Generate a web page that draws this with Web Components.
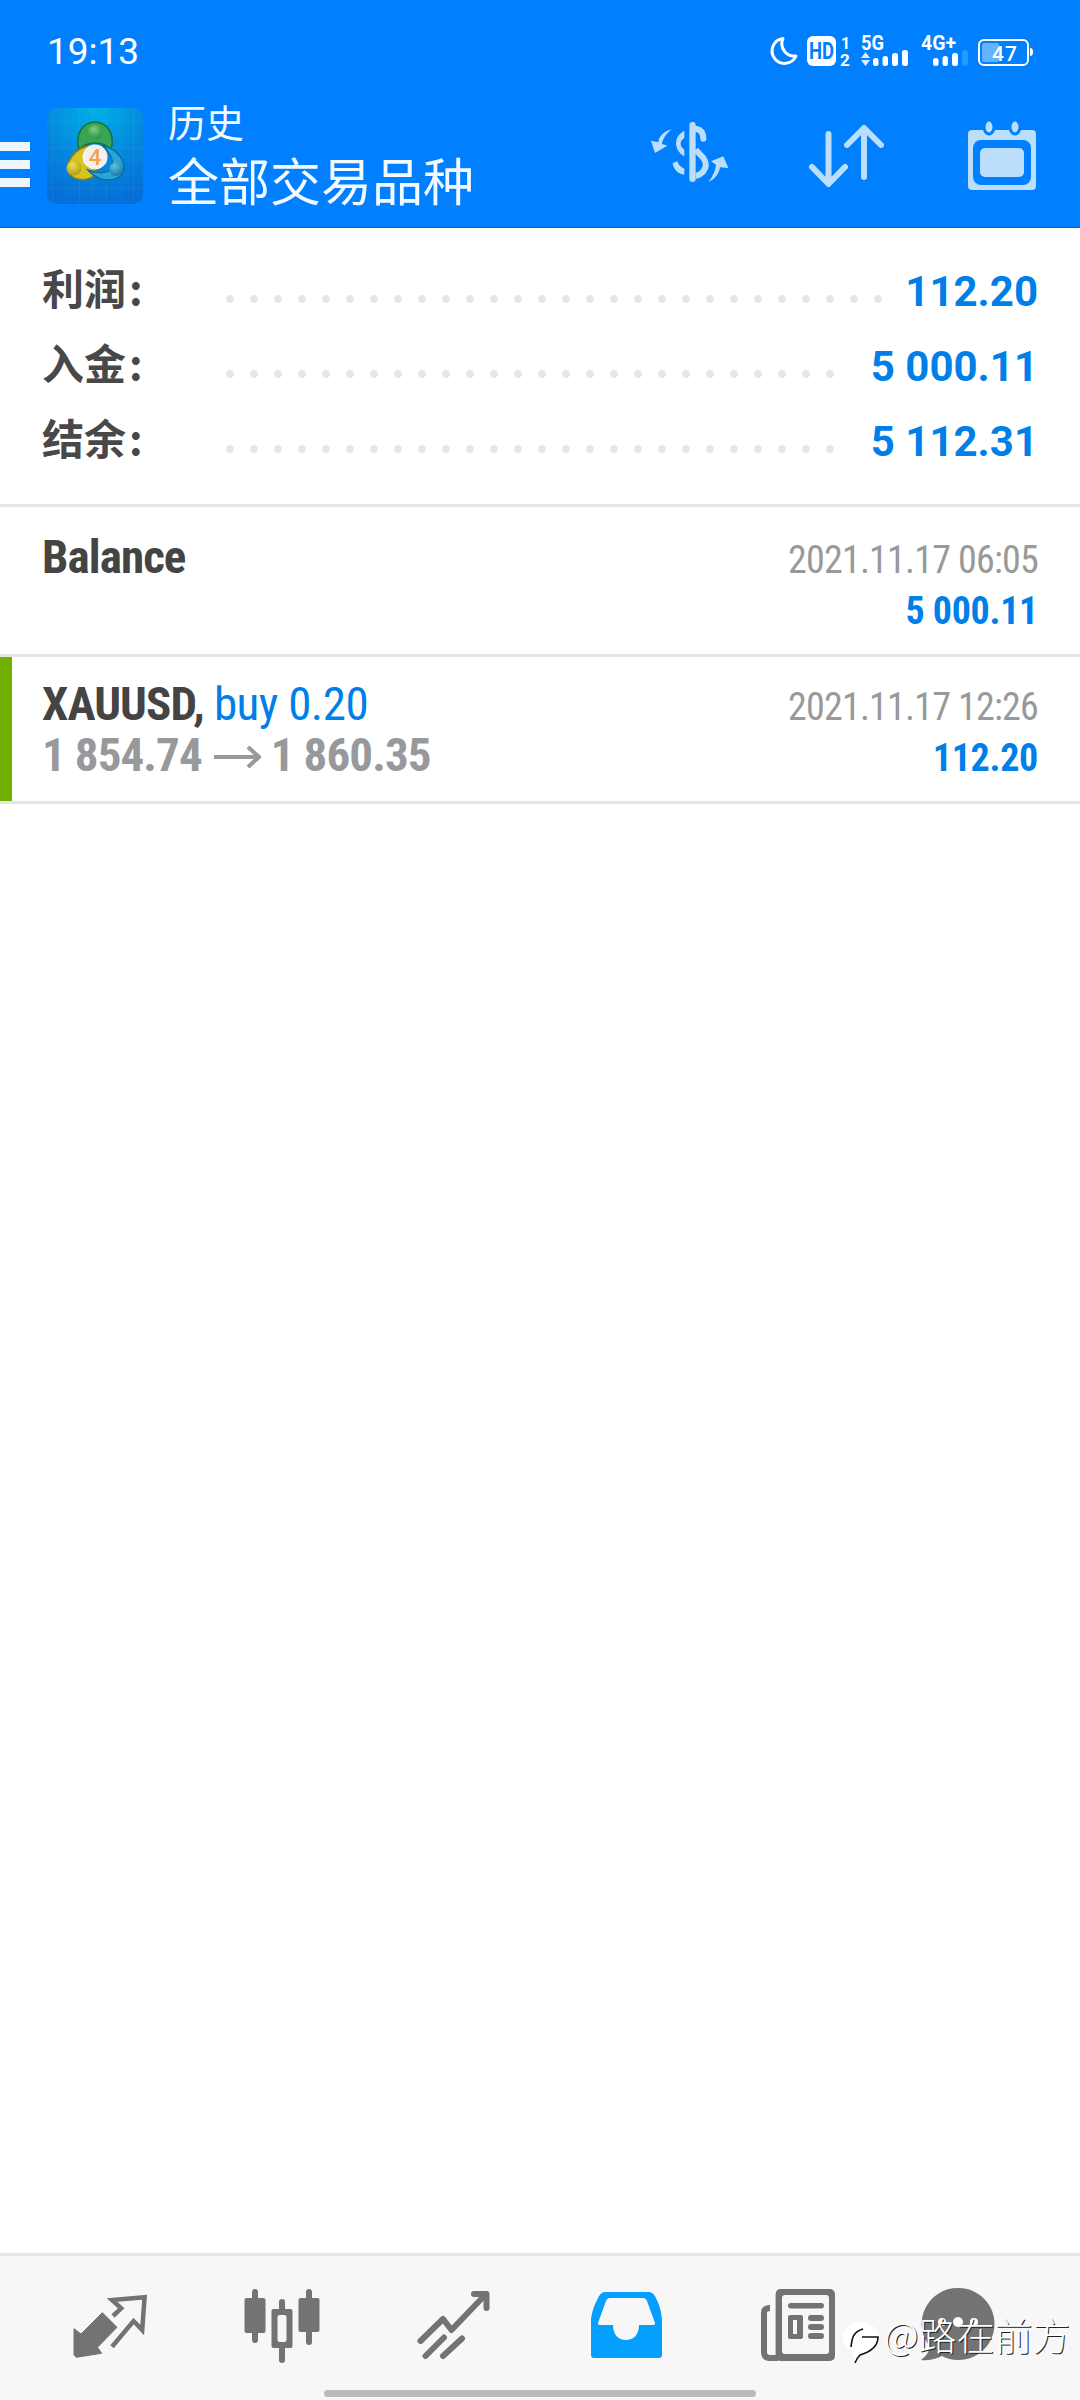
<!DOCTYPE html>
<html lang="zh">
<head>
<meta charset="utf-8">
<title>历史</title>
<style>
    html, body { margin: 0; padding: 0; background: #fff; }
    body { width: 1080px; height: 2400px; overflow: hidden; font-family: Roboto, "Noto Sans CJK SC", sans-serif; }
    app-shell { height: 2400px; }
</style>
</head>
<body>
<app-shell>
    <status-bar slot="top" time="19:13"></status-bar>
    <tool-bar slot="top" title="历史" subtitle="全部交易品种"></tool-bar>

    <summary-panel>
        <summary-row label="利润" value="112.20" dots="28"></summary-row>
        <summary-row label="入金" value="5 000.11" dots="26"></summary-row>
        <summary-row label="结余" value="5 112.31" dots="26"></summary-row>
    </summary-panel>

    <deal-row date="2021.11.17 06:05" amount="5 000.11" top="24">
        <span slot="title">Balance</span>
    </deal-row>
    <deal-row accent date="2021.11.17 12:26" amount="112.20" top="21">
        <span slot="title">XAUUSD, <deal-side>buy 0.20</deal-side></span>
        <deal-prices slot="sub" open="1 854.74" close="1 860.35"></deal-prices>
    </deal-row>

    <bottom-nav slot="bottom"></bottom-nav>
</app-shell>

<script>
const BLUE = '#007fff';

// page frame: blue head, white list, nav pinned to the bottom
class AppShell extends HTMLElement {
    constructor() {
        super();
        this.attachShadow({ mode: 'open' });
        this.shadowRoot.innerHTML = `
            <style>
                :host { display: flex; flex-direction: column; background: #fff; }
                main { flex: 1; display: block; }
            </style>
            <slot name="top"></slot>
            <main><slot></slot></main>
            <slot name="bottom"></slot>
        `;
    }
}

const statusTemplate = document.createElement('template');
statusTemplate.innerHTML = `
    <style>
        :host { display: flex; height: 102px; background: ${BLUE}; color: #fff; box-sizing: border-box; padding: 33px 0 0 47px; justify-content: space-between; align-items: flex-start; }
        .time { font: 400 37px/38px Roboto, sans-serif; }
        svg { display: block; margin: -9px 45px 0 0; }
        text { font-family: Roboto, sans-serif; font-weight: 700; fill: #fff; }
    </style>
    <div class="time"></div>
    <svg width="270" height="45" viewBox="765 24 270 45">
        <path d="M783 38.500A12.500 12.500 0 1 0 796 56A12.500 12.500 0 0 1 783 38.500Z" fill="none" stroke="#fff" stroke-width="3" stroke-linejoin="round"/>
        <rect x="807" y="36" width="29" height="30" rx="6" fill="#fff"/>
        <text x="809" y="59" font-size="23" textLength="25" lengthAdjust="spacingAndGlyphs" style="fill:${BLUE}">HD</text>
        <text x="841" y="49" font-size="16">1</text>
        <text x="840" y="66" font-size="17">2</text>
        <text x="861" y="50" font-size="20" textLength="23" lengthAdjust="spacingAndGlyphs">5G</text>
        <path d="M865.500 52L870 58H861ZM861 60H870L865.500 66Z" fill="#fff" opacity=".85"/>
        <g fill="#fff">
            <rect x="873" y="58" width="5.500" height="8" rx="2.500"/>
            <rect x="882.500" y="56" width="5.500" height="10" rx="2.500"/>
            <rect x="892" y="53" width="6" height="13" rx="2.500"/>
            <rect x="902" y="50" width="6" height="16" rx="2.500"/>
        </g>
        <text x="921" y="50" font-size="20" textLength="35" lengthAdjust="spacingAndGlyphs">4G+</text>
        <g fill="#fff">
            <rect x="933" y="58" width="5.500" height="8" rx="2.500"/>
            <rect x="942.500" y="56" width="5.500" height="10" rx="2.500"/>
            <rect x="952" y="53" width="6" height="13" rx="2.500"/>
            <rect x="962" y="50" width="6" height="16" rx="2.500" fill="#1f9bff"/>
        </g>
        <rect x="979" y="40" width="49" height="25" rx="5" fill="none" stroke="#fff" stroke-width="2"/>
        <rect x="982" y="43" width="17" height="19" rx="2" fill="#63b3ff"/>
        <path d="M1030 48a3 4 0 0 1 0 8Z" fill="#fff"/>
        <text x="992" y="61" font-size="21" textLength="25" style="font-weight:500">47</text>
    </svg>
`;

class StatusBar extends HTMLElement {
    constructor() {
        super();
        this.attachShadow({ mode: 'open' });
        this.shadowRoot.appendChild(statusTemplate.content.cloneNode(true));
        this.shadowRoot.querySelector('.time').innerText = this.getAttribute('time');
    }
}

const toolTemplate = document.createElement('template');
toolTemplate.innerHTML = `
    <style>
        :host { display: flex; height: 126px; box-sizing: border-box; background: ${BLUE}; border-bottom: 1px solid #0a63b5; color: #fff; align-items: flex-start; padding-top: 6px; }
        .menu { width: 30px; margin-top: 34px; display: flex; flex-direction: column; gap: 9px; flex: none; }
        .menu i { display: block; height: 9px; background: #eef7ff; }
        .logo { display: block; margin-left: 17px; flex: none; }
        .titles { margin-left: 25px; font-family: "Noto Sans CJK SC", sans-serif; flex: none; margin-top: -15px; }
        .t1 { font-size: 38px; line-height: 56px; font-weight: 400; color: #f2f9ff; }
        .t2 { font-size: 51px; line-height: 60px; font-weight: 400; color: #f2f9ff; }
        .actions { display: flex; flex: none; margin-left: auto; margin-right: 40px; align-items: flex-start; }
    </style>
    <div class="menu"><i></i><i></i><i></i></div>
    <svg class="logo" width="96" height="96" viewBox="48 108 96 96">
        <defs>
            <radialGradient id="lg" cx=".5" cy="0" r="1.1">
                <stop offset="0" stop-color="#00b1e6"/><stop offset=".55" stop-color="#0484dc"/><stop offset="1" stop-color="#0669d6"/>
            </radialGradient>
            <pattern id="grid" width="13.5" height="13.5" patternUnits="userSpaceOnUse">
                <path d="M13.500 0V13.500H0" fill="none" stroke="#fff" stroke-opacity=".09" stroke-width="1"/>
            </pattern>
            <radialGradient id="hg" cx=".4" cy=".3" r=".8"><stop offset="0" stop-color="#7fd07f"/><stop offset="1" stop-color="#238a3f"/></radialGradient>
            <radialGradient id="hy" cx=".4" cy=".3" r=".8"><stop offset="0" stop-color="#f0e04c"/><stop offset="1" stop-color="#a6930e"/></radialGradient>
            <radialGradient id="hb" cx=".4" cy=".3" r=".8"><stop offset="0" stop-color="#58c4e8"/><stop offset="1" stop-color="#136f9e"/></radialGradient>
        </defs>
        <rect x="48" y="108" width="96" height="96" rx="10" fill="url(#lg)"/>
        <rect x="48" y="108" width="96" height="96" rx="10" fill="url(#grid)"/>
        <path d="M80 150C75 132 86 122 96 122C106 122 117 132 112 150C108 145 102 143 96 143C90 143 84 145 80 150Z" fill="#3aa455" stroke="#14703a" stroke-width="1.500"/>
        <path d="M92 146C80 146 69 157 69 168C69 177 78 181 88 179C92 178 96 176 99 172L88 166C84 160 86 152 92 146Z" fill="#d9c41f" stroke="#8f7f10" stroke-width="1.500"/>
        <path d="M104 146C116 148 125 158 125 168C125 178 112 182 102 179C97 177 92 174 89 170C96 173 106 174 112 170C116 164 112 153 104 146Z" fill="#25a7dc" stroke="#0e6c9c" stroke-width="1.500"/>
        <circle cx="96" cy="132" r="7" fill="url(#hg)"/>
        <circle cx="75" cy="168" r="7.500" fill="url(#hy)"/>
        <circle cx="117" cy="169" r="7" fill="url(#hb)"/>
        <circle cx="96" cy="157" r="12.500" fill="#f3f1ee"/>
        <text x="96" y="165" text-anchor="middle" font-family="Roboto, sans-serif" font-size="22" font-weight="500" fill="#f5a14a">4</text>
    </svg>
    <div class="titles"><div class="t1"></div><div class="t2"></div></div>
    <div class="actions">
        <svg width="100" height="85" viewBox="0 0 300 255" fill="#bbdefb">
            <rect x="148" y="42" width="19" height="180" rx="9"/>
            <path d="M167 62Q190 65 190 92" fill="none" stroke="#bbdefb" stroke-width="18" stroke-linecap="round"/>
            <path d="M167 125L190 150Q205 170 190 190Q180 202 167 203" fill="none" stroke="#bbdefb" stroke-width="18"/>
            <path d="M133 68C100 85 100 125 133 145V125C118 115 118 100 133 90Z"/>
            <path d="M98 165C100 185 115 198 133 200V182C122 178 115 170 112 160Z"/>
            <path d="M95 64C70 70 58 85 55 103L33 98L45 135L82 113L66 108C68 92 78 78 95 64Z"/>
            <path d="M205 222C225 215 238 195 240 178L265 180L250 145L213 160L228 170C226 190 218 205 205 222Z"/>
        </svg>
        <svg style="margin-left:60px;margin-top:12px" width="90" height="72" viewBox="0 0 90 72" fill="none" stroke="#bbdefb" stroke-width="6" stroke-linecap="round" stroke-linejoin="round">
            <path d="M28.500 14V63M12 47L28.500 64L45 47"/>
            <path d="M64 8V57M47 25L64 8L81 25"/>
        </svg>
        <svg style="margin-left:75px;margin-top:9px" width="75" height="76" viewBox="0 0 75 76">
            <rect x="3" y="13" width="68" height="60" rx="4" fill="#bbdefb"/>
            <rect x="8" y="23" width="58" height="45" rx="8" fill="${BLUE}"/>
            <rect x="15" y="31" width="44" height="29" rx="5" fill="#bbdefb"/>
            <ellipse cx="24" cy="10" rx="5" ry="7" fill="#bbdefb" stroke="${BLUE}" stroke-width="3"/>
            <ellipse cx="50" cy="10" rx="5" ry="7" fill="#bbdefb" stroke="${BLUE}" stroke-width="3"/>
        </svg>
    </div>
`;

class ToolBar extends HTMLElement {
    constructor() {
        super();
        this.attachShadow({ mode: 'open' });
        this.shadowRoot.appendChild(toolTemplate.content.cloneNode(true));
        this.shadowRoot.querySelector('.t1').innerText = this.getAttribute('title');
        this.shadowRoot.querySelector('.t2').innerText = this.getAttribute('subtitle');
    }
}

class SummaryPanel extends HTMLElement {
    constructor() {
        super();
        this.attachShadow({ mode: 'open' });
        this.shadowRoot.innerHTML = `
            <style>
                :host { display: block; box-sizing: border-box; height: 279px; padding-top: 24px; border-bottom: 3px solid #e5e5e5; background: #fff; }
            </style>
            <slot></slot>
        `;
    }
}

const summaryTemplate = document.createElement('template');
summaryTemplate.innerHTML = `
    <style>
        :host { display: flex; height: 75px; align-items: center; padding: 0 42px; }
        .label { width: 176px; flex: none; font: 700 42px/75px "Noto Sans CJK SC", sans-serif; color: #484848; margin-top: -6px; }
        .colon { margin-left: 3px; }
        .dots { height: 8px; margin-top: 18px; flex: none; background: radial-gradient(circle at 12px 4px, #e6e6e6 3.6px, transparent 4.2px) 0 0 / 24px 8px repeat-x; }
        .value { margin-left: auto; font: 700 42px/75px Roboto, sans-serif; color: #007fe8; white-space: nowrap; margin-top: 4px; }
    </style>
    <div class="label"><span class="name"></span><span class="colon">:</span></div>
    <div class="dots"></div>
    <div class="value"></div>
`;

class SummaryRow extends HTMLElement {
    constructor() {
        super();
        this.attachShadow({ mode: 'open' });
        this.shadowRoot.appendChild(summaryTemplate.content.cloneNode(true));
        this.shadowRoot.querySelector('.name').innerText = this.getAttribute('label');
        this.shadowRoot.querySelector('.value').innerText = this.getAttribute('value');
        this.shadowRoot.querySelector('.dots').style.width = (this.getAttribute('dots') * 24) + 'px';
    }
}

const dealTemplate = document.createElement('template');
dealTemplate.innerHTML = `
    <style>
        :host { display: block; border-bottom: 3px solid #e5e5e5; background: #fff; }
        .row { display: flex; justify-content: space-between; box-sizing: border-box; height: 147px; padding: 22px 42px 0 42px; font-family: Roboto, sans-serif; font-stretch: 75%; }
        :host([accent]) .row { height: 144px; border-left: 12px solid #6fb000; padding-left: 30px; }
        .left { font-size: 47px; line-height: 51px; font-weight: 700; letter-spacing: -.9px; color: #444; white-space: nowrap; }
        .sub { color: #97999c; }
        .right { text-align: right; white-space: nowrap; line-height: 51px; margin-top: 4px; }
        .date { font-size: 38px; font-weight: 400; letter-spacing: -.8px; color: #999; }
        .amount { font-size: 38px; font-weight: 700; letter-spacing: -.3px; color: #007fe8; }
    </style>
    <div class="row">
        <div class="left">
            <div><slot name="title"></slot></div>
            <div class="sub"><slot name="sub"></slot></div>
        </div>
        <div class="right">
            <div class="date"></div>
            <div class="amount"></div>
        </div>
    </div>
`;

class DealRow extends HTMLElement {
    constructor() {
        super();
        this.attachShadow({ mode: 'open' });
        this.shadowRoot.appendChild(dealTemplate.content.cloneNode(true));
        this.shadowRoot.querySelector('.date').innerText = this.getAttribute('date');
        this.shadowRoot.querySelector('.amount').innerText = this.getAttribute('amount');
        this.shadowRoot.querySelector('.row').style.paddingTop = this.getAttribute('top') + 'px';
    }
}

class DealSide extends HTMLElement {
    constructor() {
        super();
        this.attachShadow({ mode: 'open' });
        this.shadowRoot.innerHTML = `
            <style>:host { display: inline; color: #007fe8; font-weight: 400; letter-spacing: -.5px; }</style>
            <slot></slot>
        `;
    }
}

class DealPrices extends HTMLElement {
    constructor() {
        super();
        this.attachShadow({ mode: 'open' });
        this.shadowRoot.innerHTML = `
            <style>
                :host { display: inline-flex; align-items: center; }
                svg { margin: 4px 10px 0 12px; display: block; }
            </style>
            <span>${this.getAttribute('open')}</span>
            <svg width="47" height="24" viewBox="0 0 47 24" fill="none" stroke="#97999c" stroke-width="4">
                <path d="M0 12H44M34 2L45 12L34 22"/>
            </svg>
            <span>${this.getAttribute('close')}</span>
        `;
    }
}

const navTemplate = document.createElement('template');
navTemplate.innerHTML = `
    <style>
        :host { display: block; position: relative; height: 147px; box-sizing: border-box; border-top: 3px solid #e5e5e5; background: #f7f7f7; }
        nav { display: flex; padding: 29px 0 0 24px; }
        .item { width: 172px; display: flex; justify-content: center; flex: none; }
        .item.last { width: 148px; }
        svg { display: block; }
        .pill { position: absolute; left: 324px; top: 134px; width: 432px; height: 7px; border-radius: 4px; background: #bbb; }
    </style>
    <nav>
        <div class="item">
            <svg width="80" height="80" viewBox="0 -5 80 80" fill="#737373">
                <path d="M32.300 22.700L47 37.300L27.500 57.300L31.600 63.300L6.400 67.300L4 65V38.700L11 44Z" stroke="#737373" stroke-linejoin="round" stroke-width="1"/>
                <path d="M42 56.700L63.600 31L72.200 40L74.600 7.300L42 10L51.200 18.300L43 26" fill="none" stroke="#737373" stroke-width="4.500"/>
            </svg>
        </div>
        <div class="item">
            <svg width="80" height="80" viewBox="0 0 80 80" fill="#737373">
                <rect x="10" y="4" width="6" height="54" rx="3"/>
                <rect x="2.500" y="13" width="21" height="35" rx="2"/>
                <rect x="37" y="14" width="6" height="64" rx="3"/>
                <rect x="29.500" y="24" width="21" height="39" rx="2"/>
                <rect x="35.500" y="30" width="9" height="27" rx="2" fill="#f7f7f7"/>
                <rect x="64" y="4" width="6" height="56" rx="3"/>
                <rect x="56.500" y="13" width="21" height="34" rx="2"/>
            </svg>
        </div>
        <div class="item">
            <svg width="80" height="80" viewBox="0 0 80 80" fill="none" stroke="#737373" stroke-width="6" stroke-linecap="round" stroke-linejoin="round">
                <path d="M6.500 56L29 34L37.500 45L71 10"/>
                <path d="M60 9H72.500V23"/>
                <path d="M11.500 71L30 52.500M29 71L48 53.500"/>
            </svg>
        </div>
        <div class="item">
            <svg width="80" height="80" viewBox="0 0 80 80">
                <path fill="#05a0ff" fill-rule="evenodd" d="M20 7H62C66 7 68 9 70 13C73 19 76 28 76 36V70A3 3 0 0 1 73 73H8A3 3 0 0 1 5 70V36C5 28 9 19 12 13C14 9 16 7 20 7ZM24 13C22 13 21 14 20 16L12 38C12 39 12 40 14 40H27C27 49 32 55 40 55C48 55 53 49 53 40H67C69 40 69 39 69 38L61 16C60 14 59 13 57 13Z"/>
            </svg>
        </div>
        <div class="item">
            <svg width="80" height="80" viewBox="0 0 80 80" fill="#737373">
                <path fill-rule="evenodd" d="M23 4H72A5 5 0 0 1 77 9V71A5 5 0 0 1 72 76H23A5.500 5.500 0 0 1 17.600 71V9A5.500 5.500 0 0 1 23 4ZM27 10A3 3 0 0 0 24 13V66A3 3 0 0 0 27 69H68A3 3 0 0 0 71 66V13A3 3 0 0 0 68 10Z"/>
                <path d="M20 73H12Q6 73 6 67V28Q6 23 12 23" fill="none" stroke="#737373" stroke-width="6"/>
                <rect x="30" y="18" width="36" height="5.500" rx="2.700"/>
                <path fill-rule="evenodd" d="M32 30H43A2 2 0 0 1 45 32V52A2 2 0 0 1 43 54H32A2 2 0 0 1 30 52V32A2 2 0 0 1 32 30ZM35 35V49H39V35Z"/>
                <rect x="50" y="30" width="16" height="6" rx="3"/>
                <rect x="50" y="39" width="16" height="6" rx="3"/>
                <rect x="50" y="48" width="16" height="6" rx="3"/>
            </svg>
        </div>
        <div class="item last">
            <svg width="80" height="80" viewBox="0 0 80 80">
                <path fill="#737373" d="M40 3A36 36 0 1 1 24 71C18 74 10 76 3 75C8 71 11 67 12 62A36 36 0 0 1 40 3Z"/>
                <circle cx="24" cy="37" r="4" fill="#fff"/>
                <circle cx="40" cy="37" r="5" fill="#fff"/>
                <circle cx="56" cy="37" r="4" fill="#fff"/>
            </svg>
        </div>
    </nav>
    <div class="pill"></div>
    <wm-badge>@路在前方</wm-badge>
`;

class BottomNav extends HTMLElement {
    constructor() {
        super();
        this.attachShadow({ mode: 'open' });
        this.shadowRoot.appendChild(navTemplate.content.cloneNode(true));
    }
}

// watermark stamped over the nav icons
class WmBadge extends HTMLElement {
    constructor() {
        super();
        this.attachShadow({ mode: 'open' });
        this.shadowRoot.innerHTML = `
            <style>
                :host { position: absolute; left: 843px; top: 63px; display: flex; align-items: flex-start; color: #fff; font: 300 38px/44px "Noto Sans CJK SC", sans-serif; text-shadow: 1px 1px 0 #222; white-space: nowrap; }
                svg { display: block; margin-right: 4px; }
                span { margin-top: -7px; }
            </style>
            <svg width="37" height="44" viewBox="843 2319 37 44">
                <path fill="#fff" d="M861 2322A17.500 15 0 0 1 878 2340C876 2349 868 2352 861 2354C858 2356 856 2360 855 2363C853 2358 853 2354 854 2351C847 2349 843 2344 843 2338C843 2329 851 2322 861 2322Z"/>
                <path fill="none" stroke="#111" stroke-width="1.600" d="M851 2347C852 2340 852 2332 863 2329M862 2337H878C878 2347 870 2352 860 2355C858 2357 856 2360 855 2363"/>
            </svg>
            <span><slot></slot></span>
        `;
    }
}

window.customElements.define('app-shell', AppShell);
window.customElements.define('status-bar', StatusBar);
window.customElements.define('tool-bar', ToolBar);
window.customElements.define('summary-panel', SummaryPanel);
window.customElements.define('summary-row', SummaryRow);
window.customElements.define('deal-row', DealRow);
window.customElements.define('deal-side', DealSide);
window.customElements.define('deal-prices', DealPrices);
window.customElements.define('bottom-nav', BottomNav);
window.customElements.define('wm-badge', WmBadge);
</script>
</body>
</html>
